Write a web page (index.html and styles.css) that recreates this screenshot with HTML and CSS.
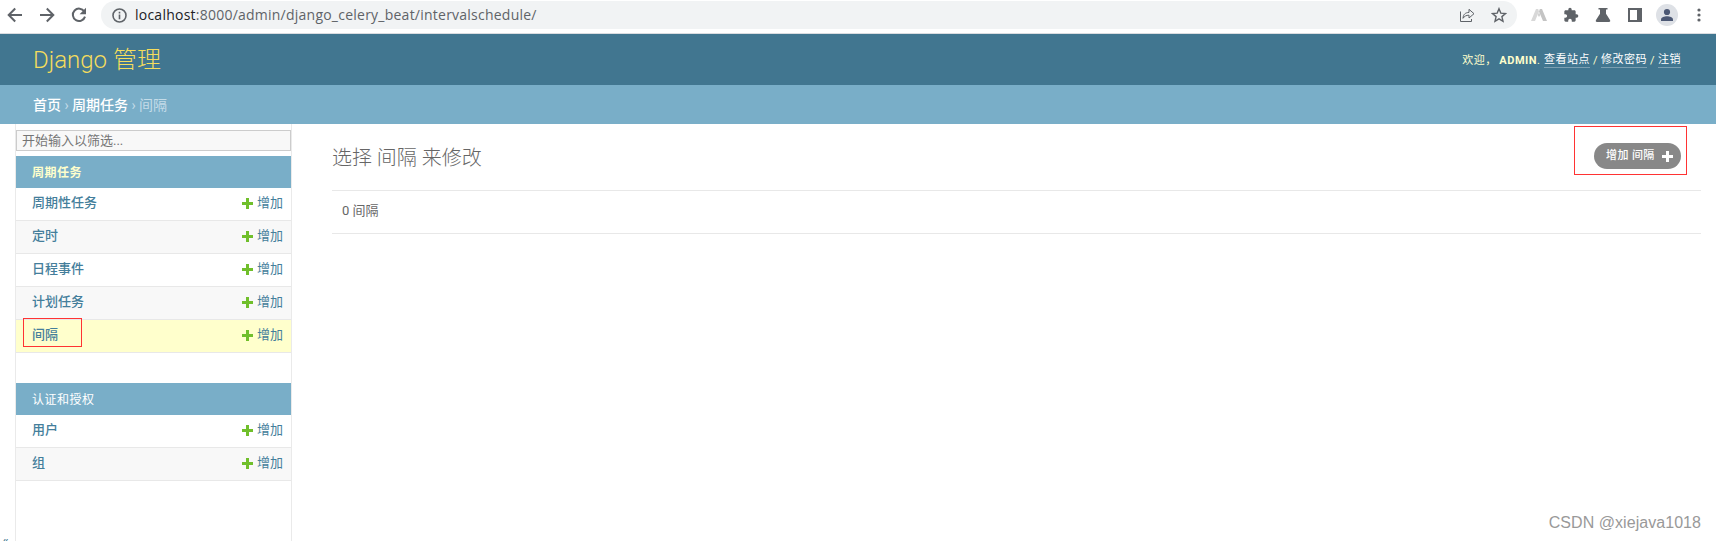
FILE: index.html
```html
<!DOCTYPE html>
<html lang="zh-CN">
<head>
<meta charset="utf-8">
<title>选择 间隔 来修改</title>
<link rel="stylesheet" href="styles.css">
</head>
<body>
<svg class="defs" width="0" height="0"><symbol id="plus" viewBox="0 0 11 11"><path d="M4 0h3v4h4v3H7v4H4V7H0V4h4z" fill="currentColor"/></symbol></svg>
<div class="toolbar">
  <div class="nav">
    <svg width="16" height="16" viewBox="0 0 16 16"><path d="M15 8H2M8.2 1.5 1.7 8l6.5 6.5"/></svg>
    <svg width="16" height="16" viewBox="0 0 16 16"><path d="M1 8h13M7.8 1.5 14.3 8l-6.500 6.500"/></svg>
    <svg width="16" height="16" viewBox="0 0 16 16"><path d="M13.300 4.500A6.200 6.200 0 1 0 14 9.600"/><path class="solid" d="M15 .8v6.400H8.600z"/></svg>
  </div>
  <div class="omnibox">
    <svg class="info" width="15" height="15" viewBox="0 0 15 15"><circle cx="7.500" cy="7.500" r="6.500"/><path d="M7.500 6.600v4.600M7.500 3.700v1.700"/></svg>
    <span class="url"><b>localhost</b>:8000/admin/django_celery_beat/intervalschedule/</span>
    <svg class="share" width="16" height="16" viewBox="0 0 16 16"><path d="M1.500 4.500v10h11V12M4 11.300c.3-4 2.300-5.700 6-5.900V2.300l5 4.400-5 4.300V8.200c-2.800 0-4.500.9-6 3.100z"/></svg>
    <svg width="16" height="16" viewBox="0 0 16 16"><path d="m8 1.700 1.800 4.400 4.700.4-3.600 3.100 1.100 4.700L8 11.800l-4 2.500 1.100-4.700-3.600-3.100 4.700-.4z"/></svg>
  </div>
  <div class="extensions">
    <svg width="16" height="16" viewBox="0 0 16 16"><path fill="#d8d8d8" d="M0 14 5 2h2.200l.8 2.500L4 14z"/><path fill="#c4c4c4" d="M8.800 2H11l5 12h-4L8 4.500z"/><path fill="#d0d0d0" d="M6.800 8 8 5l1.200 3L8 10z"/></svg>
    <svg width="16" height="16" viewBox="0 0 24 24"><path class="solid" d="M20.500 11H19V7c0-1.100-.9-2-2-2h-4V3.500a2.500 2.500 0 0 0-5 0V5H4c-1.100 0-2 .9-2 2v3.800h1.500a2.700 2.700 0 0 1 0 5.400H2V20c0 1.100.9 2 2 2h3.800v-1.500a2.700 2.700 0 0 1 5.400 0V22H17c1.100 0 2-.9 2-2v-4h1.500a2.500 2.500 0 0 0 0-5z"/></svg>
    <svg width="16" height="16" viewBox="0 0 16 16"><path class="solid" d="M3.500 1h9v1.500H11v4.300l4 6.200c.6 1 0 2-1 2H2c-1 0-1.600-1-1-2l4-6.200V2.500H3.500z"/></svg>
    <svg width="16" height="16" viewBox="0 0 16 16"><path class="solid" fill-rule="evenodd" d="M1 1h14v14H1zm2 2v10h7V3z"/></svg>
    <span class="avatar"><svg width="16" height="16" viewBox="0 0 16 16"><circle cx="8" cy="5" r="3.100"/><path d="M2 14v-1.500C2 10.300 5.500 9.300 8 9.300s6 1 6 3.200V14z"/></svg></span>
    <svg width="16" height="16" viewBox="0 0 16 16"><g class="solid"><circle cx="8" cy="3" r="1.600"/><circle cx="8" cy="8" r="1.600"/><circle cx="8" cy="13" r="1.600"/></g></svg>
  </div>
</div>
<header class="header">
  <h1 class="brand">Django 管理</h1>
  <div class="user-tools"><span class="welcome">欢迎，</span><strong>ADMIN</strong><span class="dot">.</span><a>查看站点</a><i>/</i><a>修改密码</a><i>/</i><a>注销</a></div>
</header>
<nav class="breadcrumbs"><a>首页</a><span>›</span><a>周期任务</a><span>›</span><em>间隔</em></nav>
<div class="main">
  <aside class="sidebar">
    <input class="filter" placeholder="开始输入以筛选...">
    <section class="module">
      <h2 class="caption current-app">周期任务</h2>
      <div class="row"><a>周期性任务</a><span class="add"><svg><use href="#plus"/></svg>增加</span></div>
      <div class="row"><a>定时</a><span class="add"><svg><use href="#plus"/></svg>增加</span></div>
      <div class="row"><a>日程事件</a><span class="add"><svg><use href="#plus"/></svg>增加</span></div>
      <div class="row"><a>计划任务</a><span class="add"><svg><use href="#plus"/></svg>增加</span></div>
      <div class="row current"><a>间隔</a><span class="add"><svg><use href="#plus"/></svg>增加</span><span class="mark mark-row"></span></div>
    </section>
    <section class="module">
      <h2 class="caption">认证和授权</h2>
      <div class="row"><a>用户</a><span class="add"><svg><use href="#plus"/></svg>增加</span></div>
      <div class="row"><a>组</a><span class="add"><svg><use href="#plus"/></svg>增加</span></div>
    </section>
    <span class="toggle">«</span>
  </aside>
  <main class="content">
    <div class="heading">
      <h1>选择 间隔 来修改</h1>
      <div class="object-tools"><a class="addlink">增加 间隔<svg><use href="#plus"/></svg></a><span class="mark mark-tool"></span></div>
    </div>
    <p class="paginator">0 间隔</p>
  </main>
</div>
<div class="watermark">CSDN @xiejava1018</div>
</body>
</html>
```
FILE: styles.css
```css
* { box-sizing: border-box; }
body { margin: 0; height: 541px; overflow: hidden; display: flex; flex-direction: column; background: #fff; color: #666; font: 13px/18px Roboto, "Noto Sans CJK SC", sans-serif; }
h1, h2, p { margin: 0; }
svg { display: block; flex: none; }
.defs { position: absolute; }

.toolbar { height: 34px; flex: none; display: flex; align-items: flex-start; border-bottom: 1px solid #dadce0; padding: 1px 9px 0 7px; }
.toolbar svg { fill: none; stroke: #5f6368; stroke-width: 2; }
.toolbar .solid { fill: #5f6368; stroke: none; }
.nav { width: 94px; height: 28px; display: flex; align-items: center; gap: 16px; }
.omnibox { width: 1416px; height: 28px; display: flex; align-items: center; background: #f1f3f4; border-radius: 14px; padding: 0 10px; gap: 16px; }
.omnibox svg { stroke-width: 1.400; }
.omnibox .share { stroke-width: 1; }
.omnibox .info { stroke-width: 1.600; margin-left: 1px; }
.url { flex: 1; margin-left: -8px; font: 14px/20px "Open Sans", sans-serif; letter-spacing: .235px; color: #5f6368; white-space: nowrap; }
.url b { font-weight: 400; color: #202124; }
.extensions { height: 28px; display: flex; align-items: center; gap: 16px; margin-left: 14px; }
.extensions > svg:first-child { stroke: none; }
.avatar { width: 22px; height: 22px; margin: 0 -3px; display: grid; place-items: center; border-radius: 50%; background: #dee1e6; }
.toolbar .avatar svg { fill: #4c5874; stroke: none; }

.header { height: 51px; flex: none; display: flex; align-items: center; justify-content: space-between; padding: 0 35px 0 33px; background: #417690; color: #ffc; }
.brand { font-size: 24px; line-height: 30px; font-weight: 300; color: #f5dd5d; }
.user-tools { display: flex; align-items: center; padding-top: 2px; font-size: 11px; line-height: 14px; letter-spacing: .5px; font-weight: 400; }
.user-tools a { color: #fff; border-bottom: 1px solid #7c9fb1; }
.user-tools i { width: 11px; text-align: center; font-style: normal; }
.user-tools strong { font-weight: 700; }
.welcome { width: 37px; }
.dot { width: 7px; }

.breadcrumbs { height: 39px; flex: none; display: flex; align-items: center; padding: 0 33px; background: #79aec8; color: #c4dce8; font-size: 14px; }
.breadcrumbs a { color: #fff; font-weight: 500; }
.breadcrumbs span { width: 11px; text-align: center; }
.breadcrumbs em { font-style: normal; }

.main { flex: 1; display: flex; min-height: 0; padding-left: 15px; }
.sidebar { position: relative; width: 277px; flex: none; border: solid #eaeaea; border-width: 0 1px; padding-top: 6px; }
.filter { display: block; width: 100%; height: 21px; margin-bottom: 5px; padding: 0 5px 1px; border: 1px solid #ccc; border-radius: 0; background: #f8f8f8; font: 13px/17px Roboto, "Noto Sans CJK SC", sans-serif; }
.filter::placeholder { color: #757575; }
.module { margin-bottom: 30px; }
.caption { height: 32px; padding: 1px 16px 0; line-height: 32px; font-size: 12px; font-weight: 400; letter-spacing: .5px; background: #79aec8; color: #fff; }
.current-app { color: #ffc; font-weight: 700; }
.row { position: relative; height: 33px; display: flex; justify-content: space-between; padding: 6px 8px 0 16px; border-bottom: 1px solid #e8e8e8; color: #447e9b; }
.row:nth-child(odd) { background: #f8f8f8; }
.row > a { font-weight: 500; }
.row.current { background: #ffc; }
.add { display: flex; gap: 4px; }
.add svg { width: 11px; height: 11px; margin-top: 4px; color: #70bf2b; }
.mark { position: absolute; border: 1px solid #f33; }
.mark-row { left: 7px; top: -2px; width: 59px; height: 29px; }
.toggle { position: absolute; left: -14px; top: 408px; font-size: 14px; color: #417690; }

.content { flex: 1; padding: 23px 15px 0 40px; }
.heading { display: flex; justify-content: space-between; height: 43px; }
.heading h1 { font-size: 20px; line-height: 22px; font-weight: 300; }
.object-tools { position: relative; margin: -4px 20px 0 0; height: 26px; }
.addlink { display: flex; align-items: center; width: 87px; height: 26px; padding: 0 8px 0 12px; justify-content: space-between; border-radius: 13px; background: #888; color: #fff; font-size: 11px; line-height: 26px; font-weight: 500; letter-spacing: .4px; }
.addlink svg { width: 11px; height: 11px; }
.mark-tool { left: -20px; top: -17px; width: 113px; height: 49px; }
.paginator { height: 44px; padding: 11px 10px; border: solid #e8e8e8; border-width: 1px 0; }
.watermark { position: absolute; right: 15px; bottom: 8px; font: 16px/20px "Liberation Sans", Arial, sans-serif; letter-spacing: .05px; color: #999; }
```
